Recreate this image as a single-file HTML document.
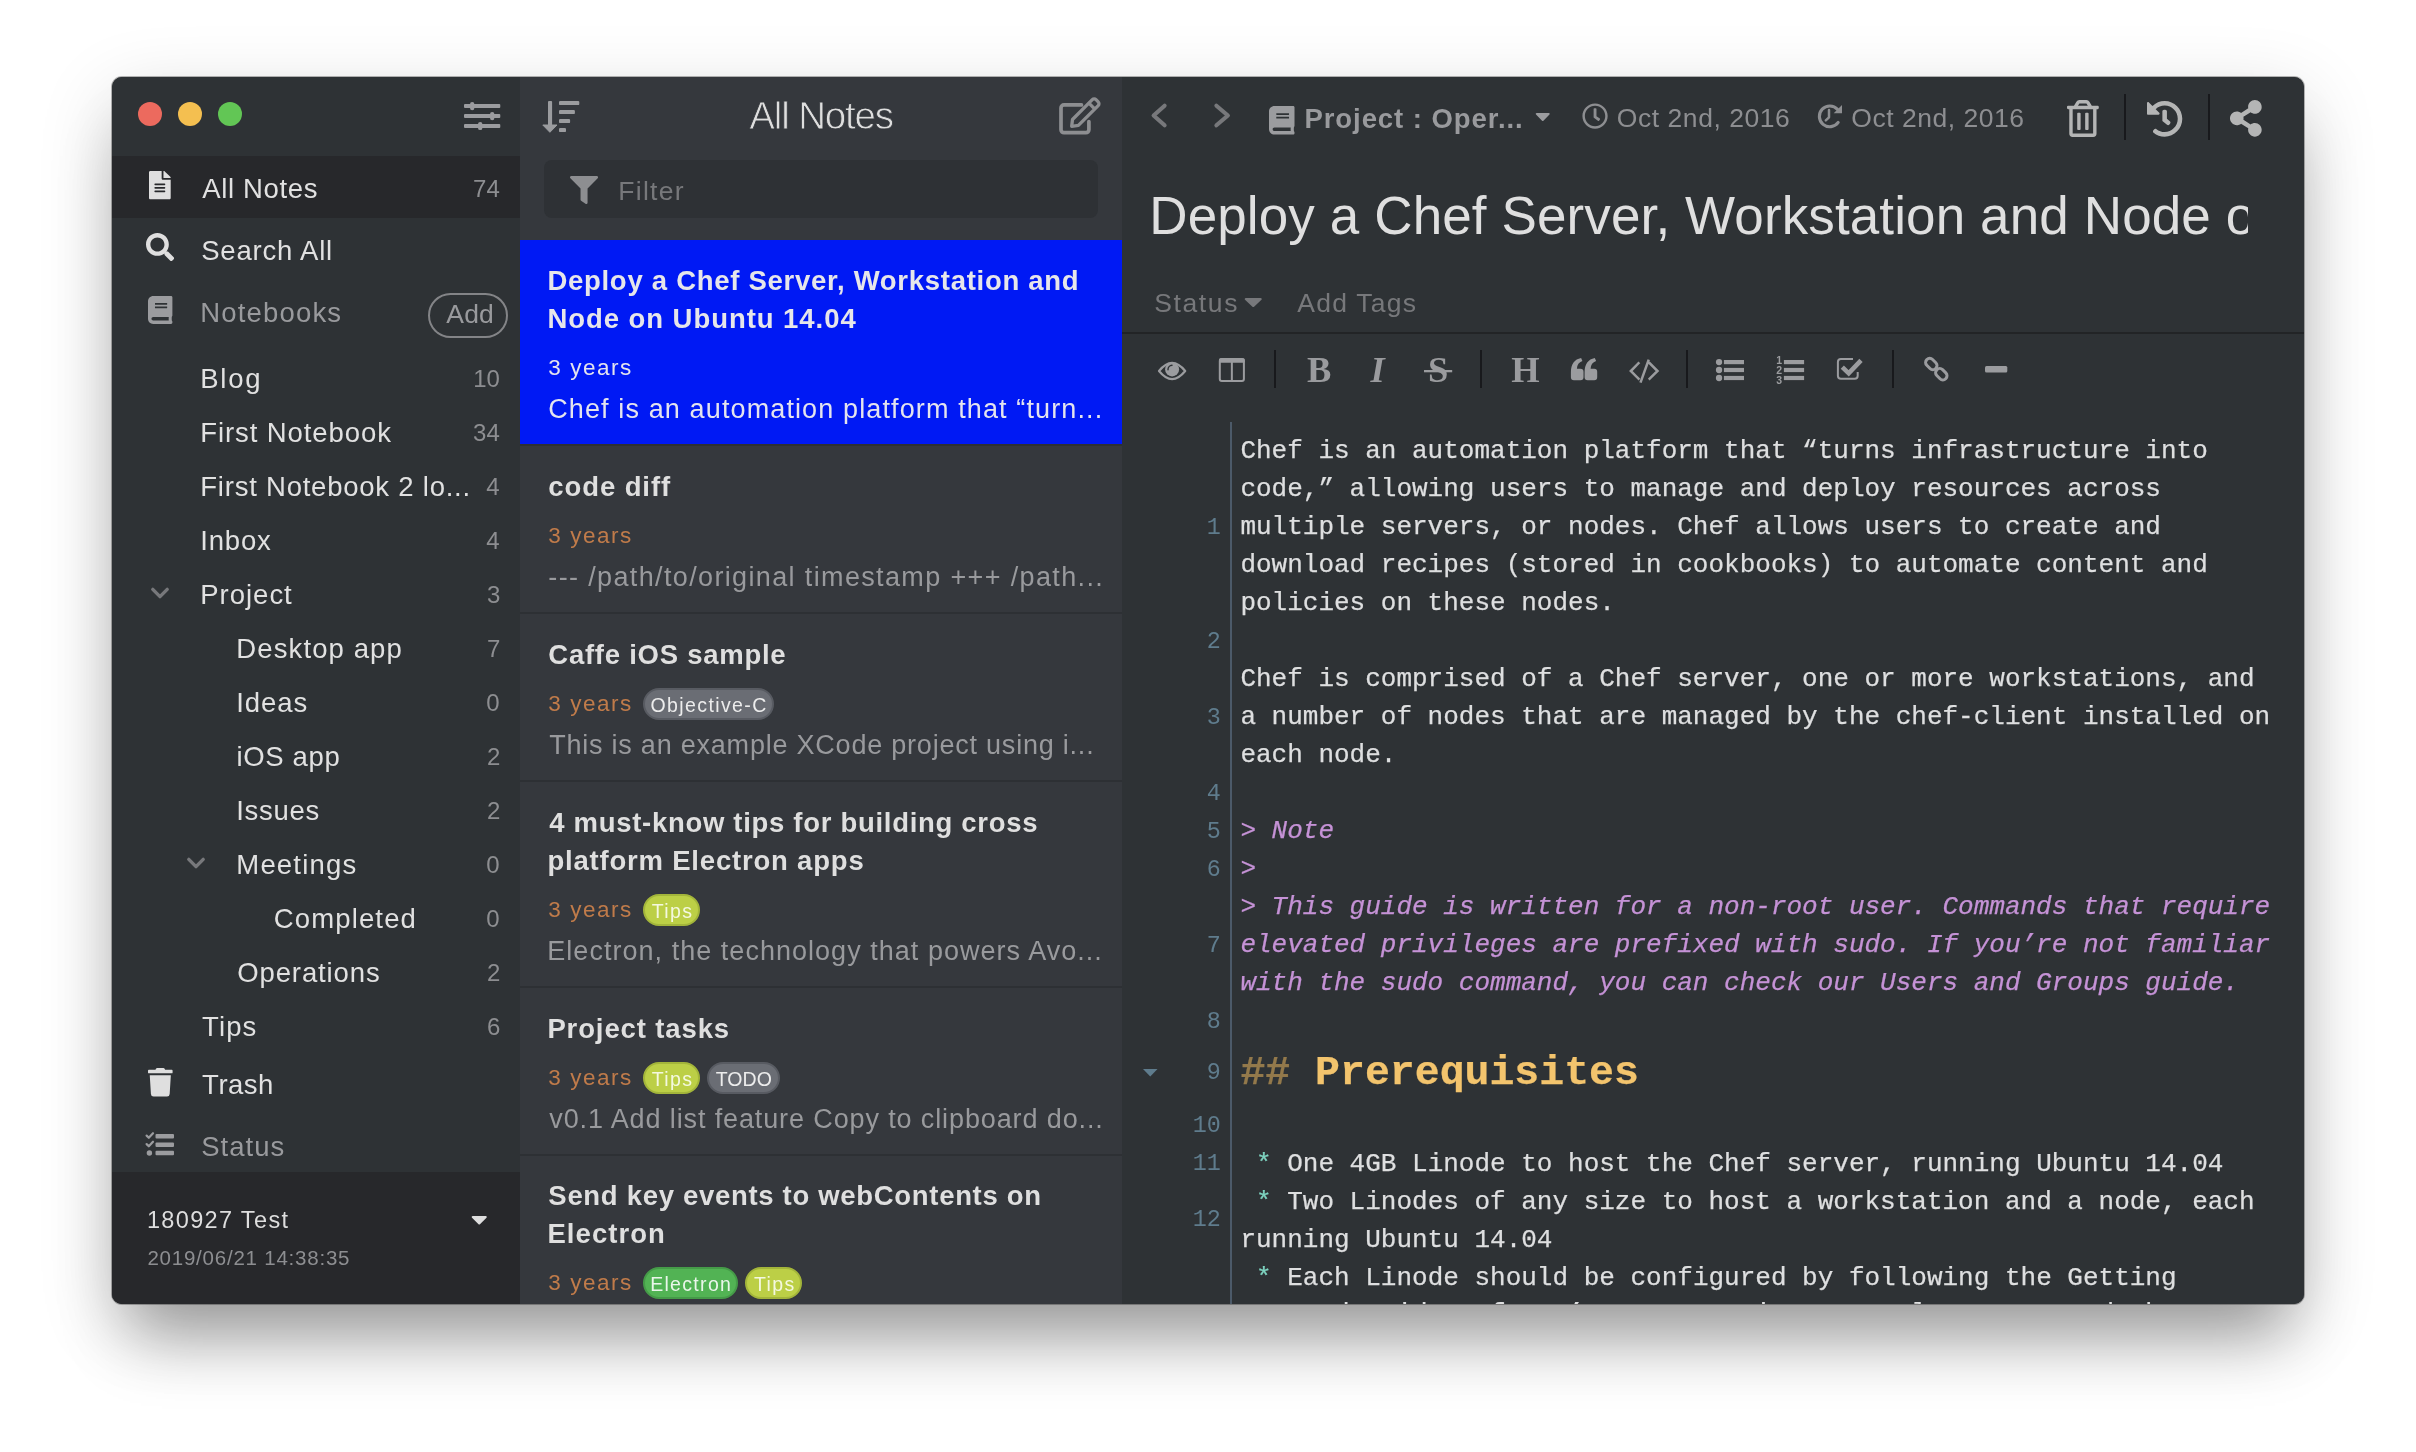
<!DOCTYPE html>
<html lang="en">
<head>
<meta charset="utf-8">
<title>Inkdrop - Deploy a Chef Server, Workstation and Node on Ubuntu 14.04</title>
<style>
html,body{margin:0;padding:0;background:#fff;}
body{width:2416px;height:1452px;position:relative;overflow:hidden;font-family:"Liberation Sans",sans-serif;}
#win{position:absolute;left:112px;top:77px;width:2192px;height:1227px;border-radius:10px;background:#2e3235;
 box-shadow:0 0 0 1px rgba(0,0,0,.28),0 50px 64px -18px rgba(0,0,0,.32),0 20px 76px rgba(0,0,0,.16);}
#clip{position:absolute;left:0;top:0;width:2192px;height:1227px;border-radius:10px;overflow:hidden;will-change:transform;}
#side,#list,#edit{position:absolute;top:0;height:1227px;overflow:hidden;}
#side{left:0;width:408px;background:#2e3235;}
#list{left:408px;width:602px;background:#35383d;}
#edit{left:1010px;width:1182px;background:#2e3235;}
.t{position:absolute;white-space:pre;line-height:1;font-family:"Liberation Sans",sans-serif;}
.b{font-weight:700;} .i{font-style:italic;}
.light{-webkit-text-stroke:0.800px #35383d;}
.title{overflow:hidden;padding-bottom:14px;}
.serif{font-family:"Liberation Serif",serif;}
.mono{font-family:"Liberation Mono",monospace;}
.ic{position:absolute;display:block;overflow:visible;}
.dot{position:absolute;top:25px;width:24px;height:24px;border-radius:50%;}
.rowsel{position:absolute;left:0;width:408px;background:#27282b;}
#add{position:absolute;left:316px;top:215.500px;width:76px;height:41px;border:2px solid #838487;border-radius:23px;}
#filter{position:absolute;left:24px;top:83px;width:554px;height:57.500px;border-radius:8px;background:#2e3135;}
.note{position:absolute;left:0;width:602px;}
.note.sel{background:#0019f4;}
.sep{position:absolute;left:0;width:602px;height:2px;background:#2d3034;}
.tag{position:absolute;height:28px;border:2px solid;border-radius:16px;}
.vsep{position:absolute;width:2px;background:#18191c;}
#hr{position:absolute;left:0;top:255px;width:1182px;height:2px;background:#222426;}
#gutterline{position:absolute;left:108px;top:344.500px;width:2px;height:900px;background:#4c5a69;}
.ln{position:absolute;font-family:"Liberation Mono",monospace;font-size:23.400px;line-height:1;color:#5f7c8d;white-space:pre;text-align:right;width:60px;left:38.800px;}
.cl{position:absolute;left:118.400px;-webkit-text-stroke:0.250px currentColor;font-family:"Liberation Mono",monospace;font-size:26px;line-height:38px;height:38px;color:#dedfe0;white-space:pre;}
.q{color:#c592d6;font-style:italic;}
.h{font-size:41.500px;line-height:66px;height:66px;font-weight:700;color:#f3c46d;}
.h .m{color:#93794b;}
.s{color:#7ed3c0;}
</style>
</head>
<body>
<div id="win"><div id="clip">
<div id="side">
<div class="dot" style="left:26px;background:#ec6a5e"></div><div class="dot" style="left:66px;background:#f4bf50"></div><div class="dot" style="left:106px;background:#62c655"></div>
<div class="rowsel" style="top:79px;height:62px"></div>
<div class="rowsel" style="top:1095px;height:140px"></div>
<div id="add"></div>
<svg class="ic" style="left:348px;top:21px" width="44" height="36" viewBox="460 98 44 36" fill="#9b9c9f" ><rect x="464" y="104.1" width="36.3" height="4" rx="1"/><rect x="470" y="102" width="4.4" height="8.2" rx="2.2"/><rect x="464" y="114.1" width="36.3" height="4" rx="1"/><rect x="490" y="112" width="4.4" height="8.2" rx="2.2"/><rect x="464" y="124" width="36.3" height="4" rx="1"/><rect x="478" y="121.9" width="4.4" height="8.2" rx="2.2"/></svg>
<svg class="ic" style="left:37.3px;top:94.4px" width="21.7" height="28.3" viewBox="0 0 384 512" fill="#dfdfdf" preserveAspectRatio="none"><path d="M224 136V0H24C10.700 0 0 10.700 0 24v464c0 13.300 10.700 24 24 24h336c13.300 0 24-10.700 24-24V160H248c-13.200 0-24-10.800-24-24zm64 236c0 6.600-5.400 12-12 12H108c-6.600 0-12-5.400-12-12v-8c0-6.600 5.400-12 12-12h168c6.600 0 12 5.400 12 12v8zm0-64c0 6.600-5.400 12-12 12H108c-6.600 0-12-5.400-12-12v-8c0-6.600 5.400-12 12-12h168c6.600 0 12 5.400 12 12v8zm0-72v8c0 6.600-5.400 12-12 12H108c-6.600 0-12-5.400-12-12v-8c0-6.600 5.400-12 12-12h168c6.600 0 12 5.400 12 12zm96-114.100v6.100H256V0h6.100c6.400 0 12.500 2.500 17 7l97.900 98c4.500 4.500 7 10.600 7 16.900z"/></svg>
<svg class="ic" style="left:33.8px;top:156.4px" width="28.1" height="28.1" viewBox="0 0 512 512" fill="#dfdfdf" preserveAspectRatio="none"><path d="M505 442.700L405.300 343c-4.500-4.500-10.600-7-17-7H372c27.600-35.300 44-79.700 44-128C416 93.100 322.900 0 208 0S0 93.100 0 208s93.100 208 208 208c48.300 0 92.700-16.400 128-44v16.300c0 6.400 2.500 12.500 7 17l99.700 99.700c9.400 9.400 24.600 9.400 33.900 0l28.300-28.300c9.400-9.400 9.400-24.600.1-34zM208 336c-70.700 0-128-57.200-128-128 0-70.700 57.200-128 128-128 70.700 0 128 57.200 128 128 0 70.700-57.200 128-128 128z"/></svg>
<svg class="ic" style="left:35.8px;top:218.7px" width="24.4" height="27.9" viewBox="0 0 448 512" fill="#9b9c9f" preserveAspectRatio="none"><path d="M448 360V24c0-13.300-10.700-24-24-24H96C43 0 0 43 0 96v320c0 53 43 96 96 96h328c13.300 0 24-10.700 24-24v-16c0-7.500-3.500-14.300-8.900-18.700-4.200-15.400-4.200-59.300 0-74.700 5.400-4.300 8.900-11.100 8.900-18.600zM128 134c0-3.300 2.700-6 6-6h212c3.300 0 6 2.700 6 6v20c0 3.300-2.700 6-6 6H134c-3.300 0-6-2.700-6-6v-20zm0 64c0-3.300 2.700-6 6-6h212c3.300 0 6 2.700 6 6v20c0 3.300-2.700 6-6 6H134c-3.300 0-6-2.700-6-6v-20zm253.400 250H96c-17.700 0-32-14.300-32-32 0-17.600 14.400-32 32-32h285.400c-1.900 17.100-1.900 46.900 0 64z"/></svg>
<svg class="ic" style="left:36.25px;top:506.75px" width="24" height="18" viewBox="148.25 583.75 24 18" fill="none" ><path d="M153.05 589.15 L160.25 596.35 L167.45 589.15" fill="none" stroke="#77787b" stroke-width="3.4" stroke-linecap="round" stroke-linejoin="round"/></svg>
<svg class="ic" style="left:72.25px;top:776.75px" width="24" height="18" viewBox="184.25 853.75 24 18" fill="none" ><path d="M189.05 859.15 L196.25 866.35 L203.45 859.15" fill="none" stroke="#77787b" stroke-width="3.4" stroke-linecap="round" stroke-linejoin="round"/></svg>
<svg class="ic" style="left:36px;top:990.5px" width="24.6" height="28.5" viewBox="0 0 448 512" fill="#dfdfdf" preserveAspectRatio="none"><path d="M432 32H312l-9.400-18.700A24 24 0 0 0 281.100 0H166.800a23.720 23.720 0 0 0-21.400 13.300L136 32H16A16 16 0 0 0 0 48v32a16 16 0 0 0 16 16h416a16 16 0 0 0 16-16V48a16 16 0 0 0-16-16zM53.200 467a48 48 0 0 0 47.900 45h245.800a48 48 0 0 0 47.900-45L416 128H32z"/></svg>
<svg class="ic" style="left:32px;top:1052px" width="32" height="29" viewBox="144 1129 32 29" fill="#9b9c9f" ><rect x="155.5" y="1133.9" width="18.5" height="4.6" rx="1"/><rect x="155.5" y="1142.4" width="18.5" height="4.6" rx="1"/><rect x="155.5" y="1150.7" width="18.5" height="4.6" rx="1"/><path d="M146.6 1135.6 l2.2 2.2 l4.2 -4.6 M146.6 1144.1 l2.2 2.2 l4.2 -4.6" fill="none" stroke="#9b9c9f" stroke-width="2.2" stroke-linecap="round" stroke-linejoin="round"/><circle cx="149.4" cy="1153" r="2.7"/></svg>
<svg class="ic" style="left:359.5px;top:1139px" width="14.5" height="8.5" viewBox="17 192 286 168" fill="#dedede" preserveAspectRatio="none"><path d="M31.300 192h257.300c17.800 0 26.700 21.500 14.100 34.100L174.100 354.800c-7.800 7.800-20.500 7.800-28.300 0L17.200 226.100C4.600 213.500 13.500 192 31.300 192z"/></svg>
<span class="t" style="left:90.29px;top:98px;font-size:27.5px;color:#e1e1e1;letter-spacing:0.64px">All Notes</span>
<span class="t" style="left:361.05px;top:100px;font-size:24px;color:#8d8e91">74</span>
<span class="t" style="left:89.17px;top:159.5px;font-size:27.5px;color:#e1e1e1;letter-spacing:0.8px">Search All</span>
<span class="t" style="left:88.29px;top:222px;font-size:27.5px;color:#999a9d;letter-spacing:1.17px">Notebooks</span>
<span class="t" style="left:334.29px;top:224px;font-size:26.5px;color:#999a9d;letter-spacing:0.17px">Add</span>
<span class="t" style="left:88.29px;top:288px;font-size:27.5px;color:#e1e1e1;letter-spacing:1.7px">Blog</span>
<span class="t" style="left:361.16px;top:290px;font-size:24px;color:#8d8e91">10</span>
<span class="t" style="left:88.29px;top:342px;font-size:27.5px;color:#e1e1e1;letter-spacing:0.91px">First Notebook</span>
<span class="t" style="left:361.05px;top:344px;font-size:24px;color:#8d8e91">34</span>
<span class="t" style="left:88.29px;top:396px;font-size:27.5px;color:#e1e1e1;letter-spacing:0.77px">First Notebook 2 lo...</span>
<span class="t" style="left:374.15px;top:398px;font-size:24px;color:#8d8e91">4</span>
<span class="t" style="left:88.16px;top:450px;font-size:27.5px;color:#e1e1e1;letter-spacing:0.85px">Inbox</span>
<span class="t" style="left:374.15px;top:452px;font-size:24px;color:#8d8e91">4</span>
<span class="t" style="left:88.29px;top:504px;font-size:27.5px;color:#e1e1e1;letter-spacing:0.98px">Project</span>
<span class="t" style="left:375px;top:506px;font-size:24px;color:#8d8e91">3</span>
<span class="t" style="left:124.29px;top:558px;font-size:27.5px;color:#e1e1e1;letter-spacing:1.11px">Desktop app</span>
<span class="t" style="left:375px;top:560px;font-size:24px;color:#8d8e91">7</span>
<span class="t" style="left:124.16px;top:612px;font-size:27.5px;color:#e1e1e1;letter-spacing:0.93px">Ideas</span>
<span class="t" style="left:374.28px;top:614px;font-size:24px;color:#8d8e91">0</span>
<span class="t" style="left:124.4px;top:666px;font-size:27.5px;color:#e1e1e1;letter-spacing:0.67px">iOS app</span>
<span class="t" style="left:375px;top:668px;font-size:24px;color:#8d8e91">2</span>
<span class="t" style="left:124.16px;top:720px;font-size:27.5px;color:#e1e1e1;letter-spacing:0.7px">Issues</span>
<span class="t" style="left:375px;top:722px;font-size:24px;color:#8d8e91">2</span>
<span class="t" style="left:124.29px;top:774px;font-size:27.5px;color:#e1e1e1;letter-spacing:1.19px">Meetings</span>
<span class="t" style="left:374.28px;top:776px;font-size:24px;color:#8d8e91">0</span>
<span class="t" style="left:161.71px;top:828px;font-size:27.5px;color:#e1e1e1;letter-spacing:1.15px">Completed</span>
<span class="t" style="left:374.28px;top:830px;font-size:24px;color:#8d8e91">0</span>
<span class="t" style="left:125.25px;top:882px;font-size:27.5px;color:#e1e1e1;letter-spacing:0.88px">Operations</span>
<span class="t" style="left:375px;top:884px;font-size:24px;color:#8d8e91">2</span>
<span class="t" style="left:90.12px;top:936px;font-size:27.5px;color:#e1e1e1;letter-spacing:1.1px">Tips</span>
<span class="t" style="left:375px;top:938px;font-size:24px;color:#8d8e91">6</span>
<span class="t" style="left:90.12px;top:994px;font-size:27.5px;color:#e1e1e1;letter-spacing:0.5px">Trash</span>
<span class="t" style="left:89.17px;top:1056px;font-size:27.5px;color:#999a9d;letter-spacing:1.05px">Status</span>
<span class="t" style="left:34.9px;top:1132px;font-size:23.5px;color:#dedede;letter-spacing:1.35px">180927 Test</span>
<span class="t" style="left:35.39px;top:1170.5px;font-size:20.5px;color:#8d8e91;letter-spacing:0.78px">2019/06/21 14:38:35</span>
</div>
<div id="list">
<div id="filter"></div>
<svg class="ic" style="left:20px;top:21px" width="42" height="37" viewBox="540 98 42 37" fill="#9b9c9f" ><rect x="548" y="100.9" width="4.1" height="26" rx="1"/><path d="M542.8 125 h14.2 l-7.1 7.3z" stroke-linejoin="round" stroke-width="1" stroke="#9b9c9f"/><rect x="559" y="100.9" width="20.3" height="4.2" rx="1.2"/><rect x="559" y="109.9" width="15.9" height="4.2" rx="1.2"/><rect x="559" y="118.9" width="11.1" height="4.2" rx="1.2"/><rect x="559" y="127.9" width="7" height="4.2" rx="1.2"/></svg>
<svg class="ic" style="left:536px;top:19px" width="47" height="41" viewBox="1056 96 47 41" fill="none" ><path d="M1081.5 104.9 H1064 a3 3 0 0 0 -3 3 V129.700 a3 3 0 0 0 3 3 H1085.900 a3 3 0 0 0 3 -3 V121.500" fill="none" stroke="#8d8e91" stroke-width="3.7" stroke-linecap="round"/><path d="M1072.500 119.500 L1092.300 99.700 a2.600 2.600 0 0 1 3.700 0 L1098.200 101.900 a2.600 2.600 0 0 1 0 3.700 L1078.400 125.400 L1071.700 126.300 Z M1089.700 103.900 L1094.100 108.300" fill="none" stroke="#8d8e91" stroke-width="3.3" stroke-linejoin="round"/></svg>
<svg class="ic" style="left:49.5px;top:98.5px" width="28.1" height="28.1" viewBox="0 0 512 512" fill="#8d8e91" preserveAspectRatio="none"><path d="M487.976 0H24.028C2.710 0-8.047 25.866 7.058 40.971L192 225.941V432c0 7.831 3.821 15.170 10.237 19.662l80 55.980C298.020 518.690 320 507.493 320 487.980V225.941l184.947-184.970C520.021 25.896 509.338 0 487.976 0z"/></svg>
<div class="note sel" style="top:163px;height:204px"></div>
<div class="sep" style="top:367px"></div>
<div class="sep" style="top:535px"></div>
<div class="tag" style="left:122.5px;top:611px;width:127.0px;background:#6a6d74;border-color:#585b62"></div>
<div class="sep" style="top:703px"></div>
<div class="tag" style="left:122.5px;top:817px;width:53.0px;background:#bccf46;border-color:#a3b53a"></div>
<div class="sep" style="top:909px"></div>
<div class="tag" style="left:122.5px;top:985px;width:53.0px;background:#bccf46;border-color:#a3b53a"></div>
<div class="tag" style="left:186.5px;top:985px;width:69.0px;background:#6a6d74;border-color:#585b62"></div>
<div class="sep" style="top:1077px"></div>
<div class="tag" style="left:122.5px;top:1190px;width:91.0px;background:#52b354;border-color:#459b48"></div>
<div class="tag" style="left:224.5px;top:1190px;width:53.5px;background:#bccf46;border-color:#a3b53a"></div>
<span class="t light" style="left:229.28px;top:19.5px;font-size:38.5px;color:#dedede;letter-spacing:-1.15px">All Notes</span>
<span class="t" style="left:98.33px;top:100.5px;font-size:26.5px;color:#77787b;letter-spacing:1.27px">Filter</span>
<span class="t b" style="left:27.4px;top:190px;font-size:27.5px;color:#e6e6ea;letter-spacing:0.72px">Deploy a Chef Server, Workstation and</span>
<span class="t b" style="left:27.4px;top:228px;font-size:27.5px;color:#e6e6ea;letter-spacing:0.95px">Node on Ubuntu 14.04</span>
<span class="t" style="left:28.36px;top:280px;font-size:22.5px;color:#e4e4ee;letter-spacing:1.51px">3 years</span>
<span class="t" style="left:28.22px;top:318.5px;font-size:27px;color:#e4e4ee;letter-spacing:1.12px">Chef is an automation platform that “turn...</span>
<span class="t b" style="left:28.35px;top:396px;font-size:27.5px;color:#dfdfdf;letter-spacing:0.9px">code diff</span>
<span class="t" style="left:28.36px;top:448px;font-size:22.5px;color:#c07b4a;letter-spacing:1.51px">3 years</span>
<span class="t" style="left:28.31px;top:486.5px;font-size:27px;color:#999a9d;letter-spacing:1.36px">--- /path/to/original timestamp +++ /path...</span>
<span class="t b" style="left:28.33px;top:564px;font-size:27.5px;color:#dfdfdf;letter-spacing:0.74px">Caffe iOS sample</span>
<span class="t" style="left:28.36px;top:616px;font-size:22.5px;color:#c07b4a;letter-spacing:1.51px">3 years</span>
<span class="t" style="left:130.4px;top:618.5px;font-size:19.5px;color:#ececec;letter-spacing:1.41px">Objective-C</span>
<span class="t" style="left:29.13px;top:654.5px;font-size:27px;color:#999a9d;letter-spacing:0.78px">This is an example XCode project using i...</span>
<span class="t b" style="left:29.22px;top:732px;font-size:27.5px;color:#dfdfdf;letter-spacing:0.7px">4 must-know tips for building cross</span>
<span class="t b" style="left:27.4px;top:770px;font-size:27.5px;color:#dfdfdf;letter-spacing:0.8px">platform Electron apps</span>
<span class="t" style="left:28.36px;top:822px;font-size:22.5px;color:#c07b4a;letter-spacing:1.51px">3 years</span>
<span class="t" style="left:131.71px;top:824.5px;font-size:19.5px;color:#f4f8df;letter-spacing:1.4px">Tips</span>
<span class="t" style="left:27.31px;top:860.5px;font-size:27px;color:#999a9d;letter-spacing:1.03px">Electron, the technology that powers Avo...</span>
<span class="t b" style="left:27.4px;top:938px;font-size:27.5px;color:#dfdfdf;letter-spacing:0.88px">Project tasks</span>
<span class="t" style="left:28.36px;top:990px;font-size:22.5px;color:#c07b4a;letter-spacing:1.51px">3 years</span>
<span class="t" style="left:131.71px;top:992.5px;font-size:19.5px;color:#f4f8df;letter-spacing:1.4px">Tips</span>
<span class="t" style="left:195.71px;top:992.5px;font-size:19.5px;color:#ececec;letter-spacing:0.07px">TODO</span>
<span class="t" style="left:29.28px;top:1028.5px;font-size:27px;color:#999a9d;letter-spacing:0.88px">v0.1 Add list feature Copy to clipboard do...</span>
<span class="t b" style="left:28.35px;top:1105px;font-size:27.5px;color:#dfdfdf;letter-spacing:0.69px">Send key events to webContents on</span>
<span class="t b" style="left:27.4px;top:1143px;font-size:27.5px;color:#dfdfdf;letter-spacing:1.07px">Electron</span>
<span class="t" style="left:28.36px;top:1195px;font-size:22.5px;color:#c07b4a;letter-spacing:1.51px">3 years</span>
<span class="t" style="left:130.14px;top:1197.5px;font-size:19.5px;color:#eaf6ea;letter-spacing:1.32px">Electron</span>
<span class="t" style="left:233.96px;top:1197.5px;font-size:19.5px;color:#f4f8df;letter-spacing:1.4px">Tips</span>
</div>
<div id="edit">
<div id="hr"></div>
<div class="vsep" style="left:1002px;top:17px;height:46px"></div>
<div class="vsep" style="left:1086px;top:17px;height:46px"></div>
<div class="vsep" style="left:152px;top:273px;height:38px"></div>
<div class="vsep" style="left:358px;top:273px;height:38px"></div>
<div class="vsep" style="left:564px;top:273px;height:38px"></div>
<div class="vsep" style="left:770px;top:273px;height:38px"></div>
<div id="gutterline"></div>
<div class="cl" style="top:355px">Chef is an automation platform that “turns infrastructure into</div>
<div class="cl" style="top:393px">code,” allowing users to manage and deploy resources across</div>
<div class="cl" style="top:431px">multiple servers, or nodes. Chef allows users to create and</div>
<div class="cl" style="top:469px">download recipes (stored in cookbooks) to automate content and</div>
<div class="cl" style="top:507px">policies on these nodes.</div>
<div class="cl" style="top:583px">Chef is comprised of a Chef server, one or more workstations, and</div>
<div class="cl" style="top:621px">a number of nodes that are managed by the chef-client installed on</div>
<div class="cl" style="top:659px">each node.</div>
<div class="cl q" style="top:735px">&gt; Note</div>
<div class="cl q" style="top:773px">&gt;</div>
<div class="cl q" style="top:811px">&gt; This guide is written for a non-root user. Commands that require</div>
<div class="cl q" style="top:849px">elevated privileges are prefixed with sudo. If you’re not familiar</div>
<div class="cl q" style="top:887px">with the sudo command, you can check our Users and Groups guide.</div>
<div class="cl h" style="top:963px"><span class="m">##</span> Prerequisites</div>
<div class="cl" style="top:1067.5px"> <span class="s">*</span> One 4GB Linode to host the Chef server, running Ubuntu 14.04</div>
<div class="cl" style="top:1105.5px"> <span class="s">*</span> Two Linodes of any size to host a workstation and a node, each</div>
<div class="cl" style="top:1143.5px">running Ubuntu 14.04</div>
<div class="cl" style="top:1181.5px"> <span class="s">*</span> Each Linode should be configured by following the Getting</div>
<div class="cl" style="top:1218.3px">Started guide. If you’re new to Linux, we also recommend that</div>
<div class="ln" style="top:440px">1</div>
<div class="ln" style="top:554px">2</div>
<div class="ln" style="top:630px">3</div>
<div class="ln" style="top:706px">4</div>
<div class="ln" style="top:744px">5</div>
<div class="ln" style="top:782px">6</div>
<div class="ln" style="top:858px">7</div>
<div class="ln" style="top:934px">8</div>
<div class="ln" style="top:985px">9</div>
<div class="ln" style="top:1037.5px">10</div>
<div class="ln" style="top:1075.5px">11</div>
<div class="ln" style="top:1132px">12</div>
<svg class="ic" style="left:26px;top:23px" width="86" height="31" viewBox="1148 100 86 31" fill="none" ><path d="M1164.600 105.700 L1153.600 115.500 L1164.600 125.300" fill="none" stroke="#77787b" stroke-width="4.1" stroke-linecap="round" stroke-linejoin="round"/></svg>
<svg class="ic" style="left:26px;top:23px" width="86" height="31" viewBox="1148 100 86 31" fill="none" ><path d="M1216.400 105.700 L1227.900 115.500 L1216.400 125.300" fill="none" stroke="#77787b" stroke-width="4.1" stroke-linecap="round" stroke-linejoin="round"/></svg>
<svg class="ic" style="left:147px;top:28.5px" width="25.5" height="28.5" viewBox="0 0 448 512" fill="#9b9c9f" preserveAspectRatio="none"><path d="M448 360V24c0-13.300-10.700-24-24-24H96C43 0 0 43 0 96v320c0 53 43 96 96 96h328c13.300 0 24-10.700 24-24v-16c0-7.500-3.500-14.300-8.900-18.700-4.200-15.400-4.200-59.300 0-74.700 5.400-4.300 8.900-11.100 8.900-18.600zM128 134c0-3.300 2.700-6 6-6h212c3.300 0 6 2.700 6 6v20c0 3.300-2.700 6-6 6H134c-3.300 0-6-2.700-6-6v-20zm0 64c0-3.300 2.700-6 6-6h212c3.300 0 6 2.700 6 6v20c0 3.300-2.700 6-6 6H134c-3.300 0-6-2.700-6-6v-20zm253.400 250H96c-17.700 0-32-14.300-32-32 0-17.600 14.400-32 32-32h285.400c-1.900 17.100-1.900 46.900 0 64z"/></svg>
<svg class="ic" style="left:414px;top:35.5px" width="13.5" height="8" viewBox="17 192 286 168" fill="#9b9c9f" preserveAspectRatio="none"><path d="M31.300 192h257.300c17.800 0 26.700 21.500 14.100 34.100L174.100 354.800c-7.800 7.800-20.500 7.800-28.300 0L17.200 226.100C4.600 213.500 13.500 192 31.300 192z"/></svg>
<svg class="ic" style="left:459.8px;top:26.3px" width="26.1" height="26.1" viewBox="0 0 512 512" fill="#8d8e91" preserveAspectRatio="none"><path d="M256 8C119 8 8 119 8 256s111 248 248 248 248-111 248-248S393 8 256 8zm0 448c-110.500 0-200-89.500-200-200S145.500 56 256 56s200 89.500 200 200-89.500 200-200 200zm61.800-104.400l-84.900-61.700c-3.100-2.300-4.900-5.900-4.900-9.700V116c0-6.600 5.400-12 12-12h32c6.600 0 12 5.400 12 12v141.700l66.800 48.600c5.400 3.900 6.500 11.400 2.600 16.800L334.600 349c-3.900 5.300-11.400 6.500-16.800 2.600z"/></svg>
<svg class="ic" style="left:691px;top:24px" width="32" height="31" viewBox="1813 101 32 31" fill="#8d8e91" ><path d="M1837.500 109.400 A10.400 10.400 0 1 0 1838.200 122.400" fill="none" stroke="#8d8e91" stroke-width="3.100" stroke-linecap="round"/><path d="M1842 104.900 V113.200 H1833.700 Z"/><path d="M1829 110 V117.300 L1825.800 120.300" fill="none" stroke="#8d8e91" stroke-width="2.500" stroke-linecap="round" stroke-linejoin="round"/></svg>
<svg class="ic" style="left:944.9px;top:23px" width="31.8" height="36.9" viewBox="0 0 448 512" fill="#b4b5b5" preserveAspectRatio="none"><path d="M268 416h24a12 12 0 0 0 12-12V188a12 12 0 0 0-12-12h-24a12 12 0 0 0-12 12v216a12 12 0 0 0 12 12zM432 80h-82.410l-34-56.700A48 48 0 0 0 274.410 0H173.590a48 48 0 0 0-41.160 23.300L98.410 80H16A16 16 0 0 0 0 96v16a16 16 0 0 0 16 16h16v336a48 48 0 0 0 48 48h288a48 48 0 0 0 48-48V128h16a16 16 0 0 0 16-16V96a16 16 0 0 0-16-16zM171.840 50.910A6 6 0 0 1 177 48h94a6 6 0 0 1 5.150 2.910L293.610 80H154.390zM368 464H80V128h288zm-212-48h24a12 12 0 0 0 12-12V188a12 12 0 0 0-12-12h-24a12 12 0 0 0-12 12v216a12 12 0 0 0 12 12z"/></svg>
<svg class="ic" style="left:1024.6px;top:23.7px" width="35.3" height="35.7" viewBox="8 8 496 496" fill="#b4b5b5" preserveAspectRatio="none"><path d="M504 255.531c.253 136.640-111.180 248.372-247.820 248.468-59.015.042-113.223-20.530-155.822-54.911-11.077-8.940-11.905-25.541-1.839-35.607l11.267-11.267c8.609-8.609 22.353-9.551 31.891-1.984C173.062 425.135 212.781 440 256 440c101.705 0 184-82.311 184-184 0-101.705-82.311-184-184-184-48.814 0-93.149 18.969-126.068 49.932l50.754 50.754c10.080 10.080 2.941 27.314-11.313 27.314H24c-8.837 0-16-7.163-16-16V38.627c0-14.254 17.234-21.393 27.314-11.314l49.372 49.372C129.209 34.136 189.552 8 256 8c136.810 0 247.747 110.780 248 247.531zm-180.912 78.784l9.823-12.630c8.138-10.463 6.253-25.542-4.210-33.679L288 256.349V152c0-13.255-10.745-24-24-24h-16c-13.255 0-24 10.745-24 24v135.651l65.409 50.874c10.463 8.137 25.541 6.253 33.679-4.210z"/></svg>
<svg class="ic" style="left:1108.4px;top:23.2px" width="31.7" height="36.7" viewBox="0 0 448 512" fill="#b4b5b5" preserveAspectRatio="none"><path d="M352 320c-22.608 0-43.387 7.819-59.790 20.895l-102.486-64.054a96.551 96.551 0 0 0 0-41.683l102.486-64.054C308.613 184.181 329.392 192 352 192c53.019 0 96-42.981 96-96S405.019 0 352 0s-96 42.981-96 96c0 7.158.790 14.130 2.276 20.841L155.790 180.895C139.387 167.819 118.608 160 96 160c-53.019 0-96 42.981-96 96s42.981 96 96 96c22.608 0 43.387-7.819 59.790-20.895l102.486 64.054A96.301 96.301 0 0 0 256 416c0 53.019 42.981 96 96 96s96-42.981 96-96-42.981-96-96-96z"/></svg>
<svg class="ic" style="left:123px;top:221px" width="16.5" height="9" viewBox="17 192 286 168" fill="#77787b" preserveAspectRatio="none"><path d="M31.300 192h257.300c17.800 0 26.700 21.500 14.100 34.100L174.100 354.800c-7.800 7.800-20.500 7.800-28.300 0L17.200 226.100C4.600 213.500 13.500 192 31.300 192z"/></svg>
<svg class="ic" style="left:34px;top:281px" width="32" height="26" viewBox="1156 358 32 26" fill="#9b9c9f" ><path d="M1159 371 C1163.500 365.500 1167.500 362.900 1172.100 362.900 C1176.700 362.900 1180.700 365.500 1185.200 371 C1180.700 376.500 1176.700 379.100 1172.100 379.100 C1167.500 379.100 1163.500 376.500 1159 371 Z" fill="none" stroke="#9b9c9f" stroke-width="2.200" stroke-linejoin="round"/><circle cx="1172.100" cy="369.400" r="7"/><path d="M1168 369.700 A4.300 4.300 0 0 1 1172 365.300" fill="none" stroke="#2e3235" stroke-width="1.400" stroke-linecap="round"/></svg>
<svg class="ic" style="left:94px;top:278px" width="32" height="30" viewBox="1216 355 32 30" fill="#9b9c9f" ><rect x="1219.800" y="359" width="24.100" height="22" rx="2" fill="none" stroke="#9b9c9f" stroke-width="2"/><rect x="1219" y="358.200" width="25.700" height="4.600" rx="1.500"/><rect x="1230.850" y="360" width="2" height="21"/></svg>
<svg class="ic" style="left:302px;top:292.8px" width="28.2" height="2.3" viewBox="0 0 10 10" fill="#9b9c9f" preserveAspectRatio="none"><rect width="10" height="10"/></svg>
<svg class="ic" style="left:447px;top:279px" width="31" height="27" viewBox="1569 356 31 27" fill="#9b9c9f" ><path d="M1570.9 372.200 c0 -8 3.600 -13 10.200 -14.200 l1.300 3.100 c-3.500 1.200 -5.300 3.800 -5.500 7.700 h3.600 a3 3 0 0 1 3 3 v5.500 a3 3 0 0 1 -3 3 h-6.600 a3 3 0 0 1 -3 -3 z"/><path d="M1584.6 372.200 c0 -8 3.600 -13 10.200 -14.200 l1.300 3.100 c-3.500 1.200 -5.300 3.800 -5.500 7.700 h3.600 a3 3 0 0 1 3 3 v5.500 a3 3 0 0 1 -3 3 h-6.600 a3 3 0 0 1 -3 -3 z"/></svg>
<svg class="ic" style="left:505px;top:280px" width="34" height="28" viewBox="1627 357 34 28" fill="none" ><path d="M1638.500 363.200 L1630.800 371 L1638.500 378.700 M1649.700 363.200 L1657.500 371 L1649.700 378.700 M1648.300 360.800 L1640.900 381.500" fill="none" stroke="#9b9c9f" stroke-width="2.500" stroke-linecap="square"/></svg>
<svg class="ic" style="left:592px;top:280px" width="32" height="26" viewBox="1714 357 32 26" fill="#9b9c9f" ><circle cx="1719.050" cy="362.1" r="3.150"/><rect x="1723.900" y="360" width="20.100" height="4.200"/><circle cx="1719.050" cy="370" r="3.150"/><rect x="1723.900" y="367.9" width="20.100" height="4.200"/><circle cx="1719.050" cy="378" r="3.150"/><rect x="1723.900" y="375.9" width="20.100" height="4.200"/></svg>
<svg class="ic" style="left:652px;top:277px" width="32" height="33" viewBox="1774 354 32 33" fill="#9b9c9f" ><rect x="1783.900" y="360" width="20.200" height="4.200"/><text x="1779.200" y="364.1" font-family="Liberation Sans, sans-serif" font-weight="700" font-size="10.500" text-anchor="middle">1</text><rect x="1783.900" y="367.9" width="20.200" height="4.200"/><text x="1779.200" y="373.9" font-family="Liberation Sans, sans-serif" font-weight="700" font-size="10.500" text-anchor="middle">2</text><rect x="1783.900" y="375.9" width="20.200" height="4.200"/><text x="1779.200" y="384.1" font-family="Liberation Sans, sans-serif" font-weight="700" font-size="10.500" text-anchor="middle">3</text></svg>
<svg class="ic" style="left:712px;top:278px" width="32" height="28" viewBox="1834 355 32 28" fill="none" ><path d="M1857.700 372 V375.800 a3 3 0 0 1 -3 3 H1840.900 a3 3 0 0 1 -3 -3 V362 a3 3 0 0 1 3 -3 H1853" fill="none" stroke="#9b9c9f" stroke-width="2"/><path d="M1842.300 367.200 L1848.700 373.300 L1861 360.300" fill="none" stroke="#9b9c9f" stroke-width="4.600" stroke-linecap="butt" stroke-linejoin="miter"/></svg>
<svg class="ic" style="left:798px;top:276px" width="32" height="32" viewBox="1920 353 32 32" fill="none" ><rect x="1925" y="359.9" width="12.600" height="8.200" rx="4" transform="rotate(45 1931.3 364)" fill="none" stroke="#9b9c9f" stroke-width="3"/><rect x="1935" y="370.1" width="12.600" height="8.200" rx="4" transform="rotate(45 1941.3 374.2)" fill="none" stroke="#9b9c9f" stroke-width="3"/></svg>
<svg class="ic" style="left:862.9px;top:288.6px" width="22.3" height="6.5" viewBox="0 0 22.3 6.5" fill="#9b9c9f" ><rect width="22.3" height="6.5" rx="1.500"/></svg>
<svg class="ic" style="left:21px;top:991.5px" width="14.5" height="7.5" viewBox="0 0 14.500 7.500" fill="#5f7c8d" ><path d="M0 0 H14.500 L7.250 7.500z"/></svg>
<span class="t b" style="left:182.4px;top:28px;font-size:27.5px;color:#999a9d;letter-spacing:0.94px">Project : Oper...</span>
<span class="t" style="left:494.77px;top:27.5px;font-size:26.5px;color:#8d8e91;letter-spacing:0.55px">Oct 2nd, 2016</span>
<span class="t" style="left:729.27px;top:27.5px;font-size:26.5px;color:#8d8e91;letter-spacing:0.51px">Oct 2nd, 2016</span>
<span class="t" style="left:32.13px;top:212.5px;font-size:26.5px;color:#77787b;letter-spacing:1.65px">Status</span>
<span class="t" style="left:175.29px;top:212.5px;font-size:26.5px;color:#77787b;letter-spacing:1.23px">Add Tags</span>
<span class="t title" style="left:27.25px;top:111.75px;font-size:53px;color:#dfdfdf;width:1098.75px;letter-spacing:0.12px">Deploy a Chef Server, Workstation and Node on Ubuntu 14.04</span>
<span class="t b serif" style="left:184.93px;top:275px;font-size:36.5px;color:#9a9b9e">B</span>
<span class="t b i serif" style="left:248.5px;top:275px;font-size:36.5px;color:#9a9b9e">I</span>
<span class="t b serif" style="left:306.1px;top:275px;font-size:36.5px;color:#9a9b9e">S</span>
<span class="t b serif" style="left:389.22px;top:275px;font-size:36.5px;color:#9a9b9e">H</span>
</div>
</div></div>
</body>
</html>
